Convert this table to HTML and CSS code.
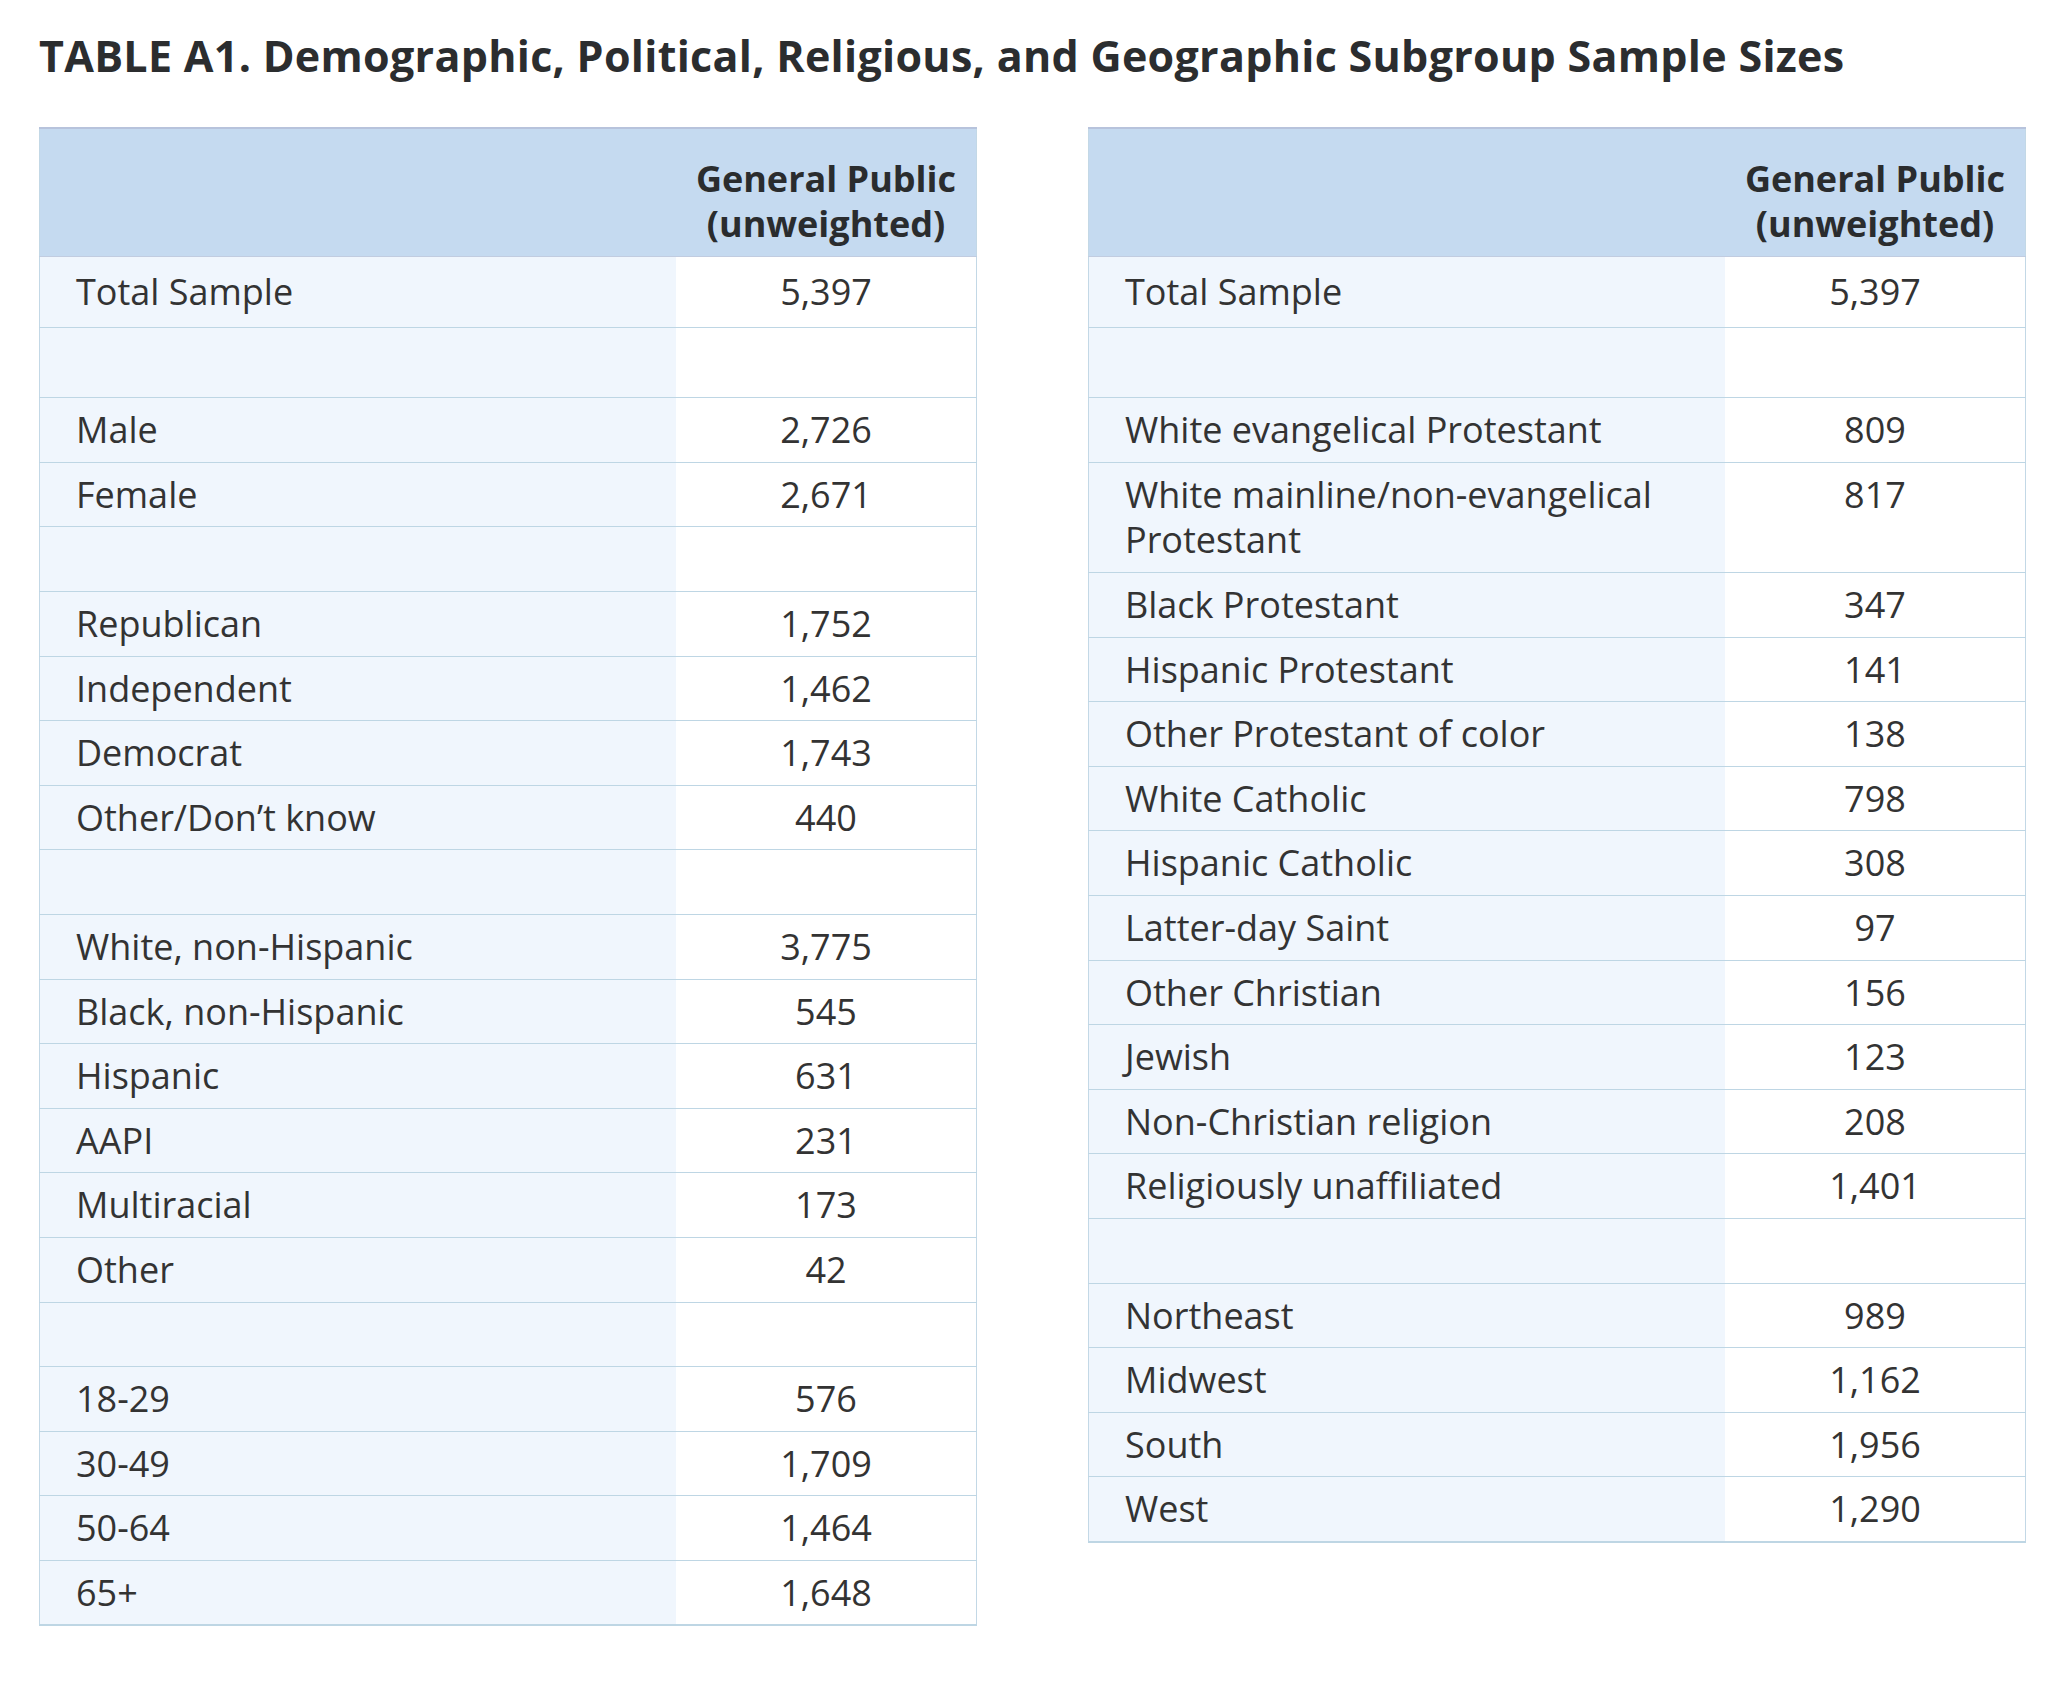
FILE: index.html
```html
<!DOCTYPE html>
<html lang="en">
<head>
<meta charset="utf-8">
<title>TABLE A1</title>
<link rel="stylesheet" href="styles.css">
</head>
<body>
<div class="page">
  <h1 class="title">TABLE A1. Demographic, Political, Religious, and Geographic Subgroup Sample Sizes</h1>
  <div class="tables">
    <table class="data">
      <thead>
        <tr><th class="label"></th><th class="num">General Public<br>(unweighted)</th></tr>
      </thead>
      <tbody>
        <tr class="tall"><td class="label">Total Sample</td><td class="num">5,397</td></tr>
        <tr class="tall"><td class="label"></td><td class="num"></td></tr>
        <tr><td class="label">Male</td><td class="num">2,726</td></tr>
        <tr><td class="label">Female</td><td class="num">2,671</td></tr>
        <tr><td class="label"></td><td class="num"></td></tr>
        <tr><td class="label">Republican</td><td class="num">1,752</td></tr>
        <tr><td class="label">Independent</td><td class="num">1,462</td></tr>
        <tr><td class="label">Democrat</td><td class="num">1,743</td></tr>
        <tr><td class="label">Other/Don’t know</td><td class="num">440</td></tr>
        <tr><td class="label"></td><td class="num"></td></tr>
        <tr><td class="label">White, non-Hispanic</td><td class="num">3,775</td></tr>
        <tr><td class="label">Black, non-Hispanic</td><td class="num">545</td></tr>
        <tr><td class="label">Hispanic</td><td class="num">631</td></tr>
        <tr><td class="label">AAPI</td><td class="num">231</td></tr>
        <tr><td class="label">Multiracial</td><td class="num">173</td></tr>
        <tr><td class="label">Other</td><td class="num">42</td></tr>
        <tr><td class="label"></td><td class="num"></td></tr>
        <tr><td class="label">18-29</td><td class="num">576</td></tr>
        <tr><td class="label">30-49</td><td class="num">1,709</td></tr>
        <tr><td class="label">50-64</td><td class="num">1,464</td></tr>
        <tr><td class="label">65+</td><td class="num">1,648</td></tr>
      </tbody>
    </table>
    <table class="data">
      <thead>
        <tr><th class="label"></th><th class="num">General Public<br>(unweighted)</th></tr>
      </thead>
      <tbody>
        <tr class="tall"><td class="label">Total Sample</td><td class="num">5,397</td></tr>
        <tr class="tall"><td class="label"></td><td class="num"></td></tr>
        <tr><td class="label">White evangelical Protestant</td><td class="num">809</td></tr>
        <tr><td class="label">White mainline/non-evangelical Protestant</td><td class="num">817</td></tr>
        <tr><td class="label">Black Protestant</td><td class="num">347</td></tr>
        <tr><td class="label">Hispanic Protestant</td><td class="num">141</td></tr>
        <tr><td class="label">Other Protestant of color</td><td class="num">138</td></tr>
        <tr><td class="label">White Catholic</td><td class="num">798</td></tr>
        <tr><td class="label">Hispanic Catholic</td><td class="num">308</td></tr>
        <tr><td class="label">Latter-day Saint</td><td class="num">97</td></tr>
        <tr><td class="label">Other Christian</td><td class="num">156</td></tr>
        <tr><td class="label">Jewish</td><td class="num">123</td></tr>
        <tr><td class="label">Non-Christian religion</td><td class="num">208</td></tr>
        <tr><td class="label">Religiously unaffiliated</td><td class="num">1,401</td></tr>
        <tr><td class="label"></td><td class="num"></td></tr>
        <tr><td class="label">Northeast</td><td class="num">989</td></tr>
        <tr><td class="label">Midwest</td><td class="num">1,162</td></tr>
        <tr><td class="label">South</td><td class="num">1,956</td></tr>
        <tr><td class="label">West</td><td class="num">1,290</td></tr>
      </tbody>
    </table>
  </div>
</div>
</body>
</html>
```
FILE: styles.css
```css
html, body {
  margin: 0;
  padding: 0;
  background: #ffffff;
}

body {
  font-family: "Open Sans", "Noto Sans", "Liberation Sans", sans-serif;
  color: #333333;
}

.page {
  padding: 31px 37px 40px 39px;
}

.title {
  margin: 0;
  font-size: 43px;
  line-height: 50px;
  font-weight: 700;
  color: #2b2d2f;
  letter-spacing: 0.3px;
}

.tables {
  display: flex;
  align-items: flex-start;
  gap: 111px;
  margin-top: 46px;
}

.data {
  flex: 0 0 938px;
  width: 938px;
  border-collapse: collapse;
  table-layout: fixed;
  border-left: 1px solid #c3d8e6;
  border-right: 1px solid #c3d8e6;
  font-size: 36px;
  line-height: 45.6px;
}

.data th {
  background: #c5daf0;
  border-top: 2px solid #b7c3dc;
  border-bottom: 1px solid #c1cce0;
  padding: 26px 0 9px;
  font-weight: 700;
  color: #2a2c2e;
  vertical-align: bottom;
  height: 92px;
}

.data th.label {
  width: 636px;
}

.data th.num {
  width: 300px;
  text-align: center;
}

.data td {
  padding-top: 9px;
  padding-bottom: 9px;
  border-bottom: 1px solid #bed6e4;
  vertical-align: top;
  height: 45.6px;
}

.data tr.tall td {
  padding-top: 12px;
  padding-bottom: 12px;
}

.data td.label {
  background: #f0f6fd;
  padding-left: 36px;
  padding-right: 20px;
}

.data td.num {
  background: #ffffff;
  text-align: center;
  padding-left: 0;
  padding-right: 0;
}

.data tbody tr:last-child td {
  border-bottom: 2px solid #bed6e4;
}
```
